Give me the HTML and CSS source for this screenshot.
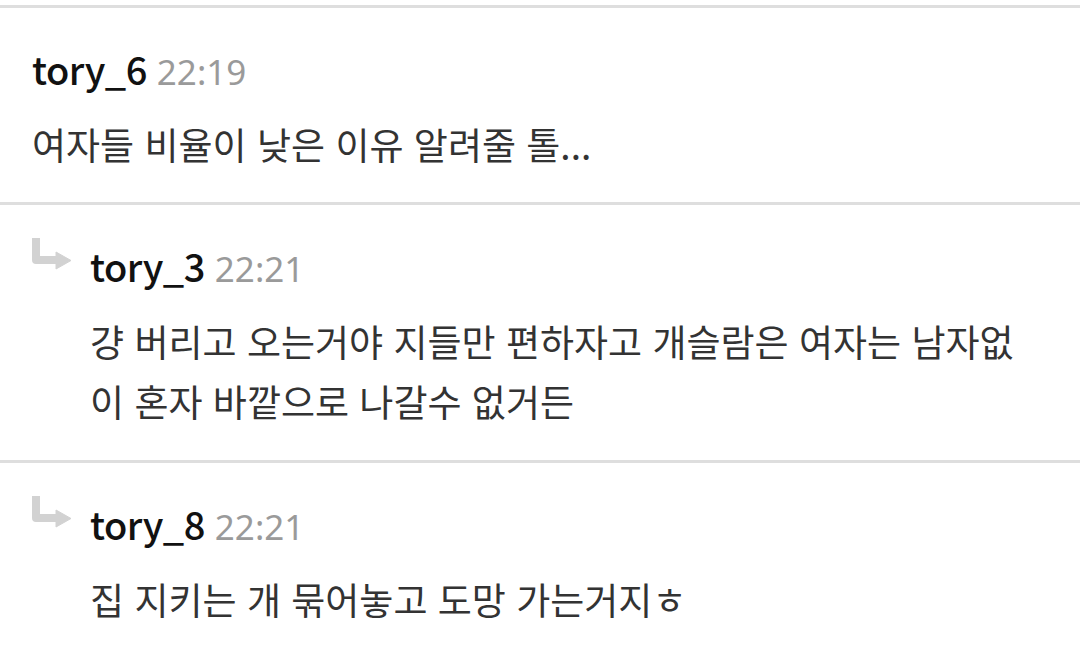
FILE: index.html
```html
<!DOCTYPE html>
<html lang="ko">
<head>
<meta charset="utf-8">
<link rel="stylesheet" href="styles.css">
</head>
<body>
<div class="list">
  <div class="comment">
    <div class="head"><span class="name">tory_6</span><span class="time">22:19</span></div>
    <div class="text">여자들 비율이 낮은 이유 알려줄 톨...</div>
  </div>
  <div class="comment reply">
    <svg class="arrow" width="42" height="32" viewBox="0 0 42 32"><path d="M6 0 V22 H28" fill="none" stroke="#d2d2d2" stroke-width="8" stroke-linejoin="round"/><path d="M26 14 L41 22.5 L26 31 Z" fill="#d2d2d2" stroke="#d2d2d2" stroke-width="1" stroke-linejoin="round"/></svg>
    <div class="body">
      <div class="head"><span class="name">tory_3</span><span class="time">22:21</span></div>
      <div class="text">걍 버리고 오는거야 지들만 편하자고 개슬람은 여자는 남자없이 혼자 바깥으로 나갈수 없거든</div>
    </div>
  </div>
  <div class="comment reply">
    <svg class="arrow" width="42" height="32" viewBox="0 0 42 32"><path d="M6 0 V22 H28" fill="none" stroke="#d2d2d2" stroke-width="8" stroke-linejoin="round"/><path d="M26 14 L41 22.5 L26 31 Z" fill="#d2d2d2" stroke="#d2d2d2" stroke-width="1" stroke-linejoin="round"/></svg>
    <div class="body">
      <div class="head"><span class="name">tory_8</span><span class="time">22:21</span></div>
      <div class="text">집 지키는 개 묶어놓고 도망 가는거지ㅎ</div>
    </div>
  </div>
</div>
</body>
</html>
```
FILE: styles.css
```css
html, body {
  margin: 0;
  padding: 0;
  background: #fff;
}
body {
  font-family: "Noto Sans CJK KR", "Noto Sans", sans-serif;
  width: 1080px;
  height: 656px;
  overflow: hidden;
}
.list {
  padding-top: 5px;
}
.comment {
  border-top: 3px solid #dedede;
  padding: 31px 40px 28px 32px;
}
.reply {
  display: flex;
  padding-left: 30px;
  padding-bottom: 29px;
}
.arrow {
  flex: none;
  margin-top: 2px;
  margin-right: 18px;
}
.body {
  flex: 1;
  min-width: 0;
}
.head {
  font-size: 38px;
  line-height: 60px;
  height: 60px;
  white-space: nowrap;
}
.name {
  color: #111;
  font-weight: 500;
  letter-spacing: -0.5px;
}
.time {
  color: #9a9a9a;
  margin-left: 10px;
  font-size: 35px;
  font-weight: 400;
  font-family: "Noto Sans", sans-serif;
}
.text {
  margin-top: 15px;
  font-size: 37px;
  line-height: 60px;
  color: #333;
  word-break: break-all;
}
```
